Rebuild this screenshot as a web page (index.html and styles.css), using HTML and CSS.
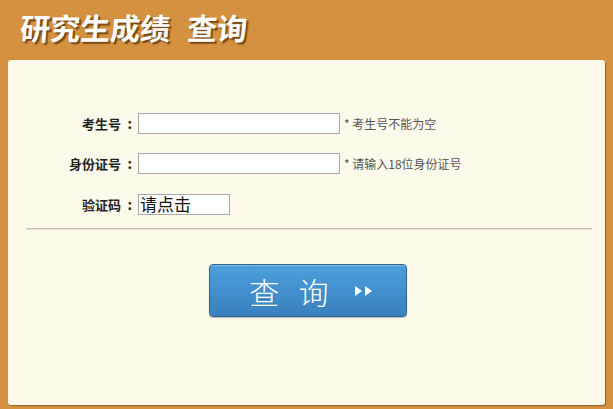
FILE: index.html
```html
<!DOCTYPE html>
<html lang="zh-CN">
<head>
<meta charset="utf-8">
<title>研究生成绩查询</title>
<link rel="stylesheet" href="styles.css">
</head>
<body>
<div class="header"><h1 class="title">研究生成绩<span class="title-gap"></span>查询</h1></div>
<div class="panel">
  <form class="form">
    <div class="row">
      <label class="label">考生号<span class="colon">:</span></label>
      <input class="field" type="text">
      <span class="hint">* 考生号不能为空</span>
    </div>
    <div class="row">
      <label class="label">身份证号<span class="colon">:</span></label>
      <input class="field" type="text">
      <span class="hint">* 请输入18位身份证号</span>
    </div>
    <div class="row">
      <label class="label">验证码<span class="colon">:</span></label>
      <div class="captcha">请点击</div>
    </div>
  </form>
  <div class="divider"></div>
  <div class="actions">
    <button class="btn" type="button"><span class="btn-text">查&nbsp;&nbsp;询</span><svg class="btn-arrows" width="22" height="14" viewBox="0 0 22 14"><polygon points="2,2 9,7 2,12" fill="#fff"/><polygon points="12,2 19,7 12,12" fill="#fff"/></svg></button>
  </div>
</div>
</body>
</html>
```
FILE: styles.css
```css
html, body {
  margin: 0;
  padding: 0;
}
body {
  width: 613px;
  height: 409px;
  background: #d4913f;
  font-family: "Noto Sans CJK SC", "DejaVu Sans", sans-serif;
  overflow: hidden;
}
.header {
  height: 60px;
  box-sizing: border-box;
  padding: 6px 0 0 19px;
}
.title {
  margin: 0;
  color: #fff;
  font-size: 30px;
  font-weight: 700;
  line-height: 42px;
  text-shadow: 2px 2px 1px rgba(90, 50, 10, 0.75);
  transform: skewX(-4deg);
  transform-origin: left bottom;
}
.title-gap {
  display: inline-block;
  width: 17px;
}
.panel {
  margin: 0 0 0 8px;
  width: 597px;
  height: 345px;
  box-sizing: border-box;
  background: #fdfaec;
  border-radius: 3px;
  box-shadow: 1px 1px 1px rgba(110, 70, 30, 0.6);
  padding-top: 53px;
}
.form {
  display: flex;
  flex-direction: column;
  gap: 19px;
}
.row {
  display: flex;
  align-items: center;
  height: 21px;
}
.label {
  width: 124px;
  text-align: right;
  font-size: 13px;
  font-weight: 700;
  color: #222;
  margin-right: 6px;
  line-height: 21px;
}
.colon {
  display: inline-block;
  padding-left: 5px;
  width: 6px;
  font-weight: 700;
  font-size: 14px;
}
.field {
  width: 202px;
  height: 21px;
  box-sizing: border-box;
  border: 1px solid #a9a9a9;
  background: #fff;
  margin: 0;
  padding: 0 3px;
}
.hint {
  margin-left: 4px;
  font-size: 12px;
  color: #555;
}
.captcha {
  width: 92px;
  height: 21px;
  box-sizing: border-box;
  border: 1px solid #a9a9a9;
  background: #fff;
  font-size: 17px;
  line-height: 18px;
  color: #111;
  padding-left: 1px;
}
.row:last-child {
  margin-top: 1px;
}
.divider {
  margin: 13px 13px 0 18px;
  height: 1px;
  background: #c9c2a4;
  box-shadow: 0 1px 0 #e8e2c8;
}
.actions {
  display: flex;
  justify-content: center;
  padding-top: 35px;
}
.btn {
  width: 198px;
  height: 53px;
  box-sizing: border-box;
  border: 1px solid #2b6596;
  border-radius: 4px;
  background: linear-gradient(#4c9fdc, #3b80bf);
  box-shadow: inset 0 1px 0 rgba(255, 255, 255, 0.3), 0 1px 1px rgba(0, 0, 0, 0.25);
  color: #fff;
  display: flex;
  align-items: center;
  justify-content: center;
  padding: 0 0 0 8px;
  font-family: "Noto Sans CJK SC", sans-serif;
  cursor: pointer;
  margin-left: 3px;
}
.btn-text {
  font-size: 30px;
  line-height: 40px;
  font-weight: 300;
  letter-spacing: 2px;
}
.btn-arrows {
  margin-left: 22px;
}
```
